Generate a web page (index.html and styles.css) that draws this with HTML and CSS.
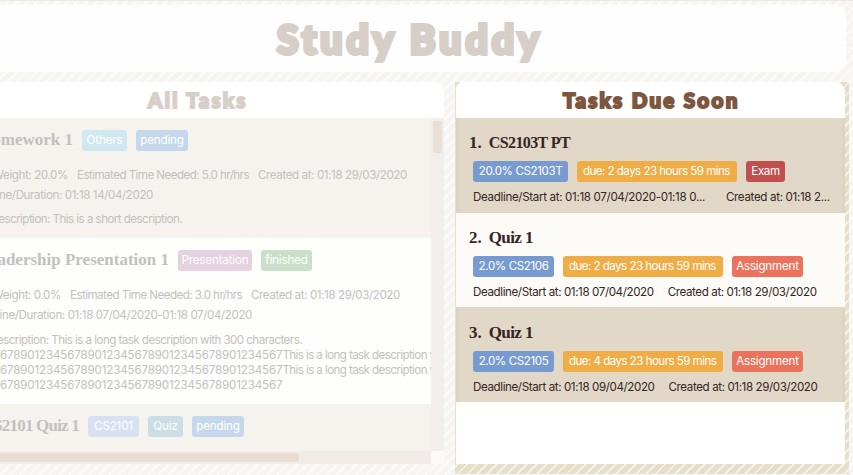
FILE: index.html
```html
<!DOCTYPE html>
<html lang="en">
<head>
<meta charset="utf-8">
<title>Study Buddy</title>
<link rel="stylesheet" href="styles.css">
</head>
<body>
<div class="app">
  <header class="banner"><h1>Study Buddy</h1></header>
  <main class="columns">
    <section class="all">
      <h2>All Tasks</h2>
      <div class="body">
        <div class="list">
          <article class="task t1">
            <div class="head"><h3 class="n1">Homework 1</h3><span class="tag others">Others</span><span class="tag pending">pending</span></div>
            <p class="meta"><span class="w1">Weight: 20.0%</span><span class="est">Estimated Time Needed: 5.0 hr/hrs</span><span>Created at: 01:18 29/03/2020</span></p>
            <p class="date d1">Deadline/Duration: 01:18 14/04/2020</p>
            <p class="desc e1">Description: This is a short description.</p>
          </article>
          <article class="task t2">
            <div class="head"><h3 class="n2">Leadership Presentation 1</h3><span class="tag pres">Presentation</span><span class="tag done">finished</span></div>
            <p class="meta"><span class="w2">Weight: 0.0%</span><span class="est">Estimated Time Needed: 3.0 hr/hrs</span><span>Created at: 01:18 29/03/2020</span></p>
            <p class="date d2">Deadline/Duration: 01:18 07/04/2020-01:18 07/04/2020</p>
            <p class="desc e2">Description: This is a long task description with 300 characters.</p>
            <p class="digits">678901234567890123456789012345678901234567<span>This is a long task description with</span></p>
            <p class="digits">678901234567890123456789012345678901234567<span>This is a long task description with</span></p>
            <p class="digits">678901234567890123456789012345678901234567</p>
          </article>
          <article class="task t3">
            <div class="head"><h3 class="n3">CS2101 Quiz 1</h3><span class="tag module">CS2101</span><span class="tag quiz">Quiz</span><span class="tag pending">pending</span></div>
          </article>
        </div>
        <div class="vbar"><i></i></div>
        <div class="hbar"><i></i></div>
        <div class="corner"></div>
      </div>
    </section>
    <aside class="due">
      <div class="panel">
        <h2>Tasks Due Soon</h2>
        <div class="items">
          <article class="item">
            <h3>1.<b class="tight">CS2103T PT</b></h3>
            <div class="tags"><span class="tag code">20.0% CS2103T</span><span class="tag time">due: 2 days 23 hours 59 mins</span><span class="tag exam">Exam</span></div>
            <p class="foot cut"><span>Deadline/Start at: 01:18 07/04/2020-01:18 0...</span><span>Created at: 01:18 2...</span></p>
          </article>
          <article class="item">
            <h3>2.<b>Quiz 1</b></h3>
            <div class="tags"><span class="tag code">2.0% CS2106</span><span class="tag time">due: 2 days 23 hours 59 mins</span><span class="tag assign">Assignment</span></div>
            <p class="foot"><span>Deadline/Start at: 01:18 07/04/2020</span><span>Created at: 01:18 29/03/2020</span></p>
          </article>
          <article class="item">
            <h3>3.<b>Quiz 1</b></h3>
            <div class="tags"><span class="tag code">2.0% CS2105</span><span class="tag time">due: 4 days 23 hours 59 mins</span><span class="tag assign">Assignment</span></div>
            <p class="foot"><span>Deadline/Start at: 01:18 09/04/2020</span><span>Created at: 01:18 29/03/2020</span></p>
          </article>
        </div>
      </div>
    </aside>
  </main>
</div>
</body>
</html>
```
FILE: styles.css
```css
* { box-sizing: border-box; }
body { margin: 0; }
h1, h2, h3, p { margin: 0; white-space: nowrap; }

.app {
  width: 853px;
  height: 475px;
  padding-top: 5px;
  overflow: hidden;
  border-top: 1px solid #eee8e4;
  background: repeating-linear-gradient(135deg, #f7f5f1 0 5px, #fcfbf9 5px 7px);
  font: 11.6px/15px Inter, "Liberation Sans", sans-serif;
  letter-spacing: -0.4px;
}
.banner {
  width: 846px;
  height: 67px;
  margin-top: -1px;
  border-radius: 0 10px 10px 0;
  background: #fefefe;
}
h1, h2 {
  font-family: Lato, "Open Sans", sans-serif;
  font-weight: 900;
}
h1 {
  padding-left: 277px;
  color: #d8cec8;
  font-size: 39px;
  line-height: 68px;
  letter-spacing: 4px;
  -webkit-text-stroke: 4px #d8cec8;
}
.columns { display: flex; gap: 11px; margin-top: 10px; }

.all { width: 444px; height: 382px; }
h2 {
  height: 36px;
  background: #fff;
  font-size: 20.5px;
  line-height: 36px;
}
.all h2 {
  padding-left: 148px;
  border-radius: 0 10px 0 0;
  color: #d8cec8;
  letter-spacing: 2.3px;
  -webkit-text-stroke: 2px #d8cec8;
}
.body {
  display: grid;
  grid-template: 333px 13px / 431px 13px;
}
.list { overflow: hidden; color: #c4c0be; }
.task { background: #f6f3ef; }
.t1 { height: 120px; padding-top: 12px; }
.t2 { height: 166px; padding-top: 12px; background: #fefefd; }
.t3 { height: 47px; padding-top: 12px; }
.head { display: flex; height: 21px; gap: 9px; }
h3 {
  font: bold 17px/20px "Liberation Serif", serif;
  letter-spacing: 0;
}
.head h3, .w1, .w2, .date, .desc { display: flex; justify-content: flex-end; flex: none; }
.n1 { width: 73px; }
.n2 { width: 169px; }
.n3 { width: 79px; letter-spacing: -0.8px; }
.tag {
  display: block;
  height: 21px;
  border-radius: 3px;
  color: #fff;
  line-height: 21px;
  text-align: center;
  flex: none;
}
.head .tag { letter-spacing: -0.15px; }
.others { width: 45px; background: #d0e9f1; }
.pending { width: 52px; background: #c5d8eb; }
.pres { width: 74px; background: #e4d2e0; }
.done { width: 51px; background: #c9dfca; }
.module { width: 51px; background: #d7e1f2; }
.quiz { width: 35px; background: #cadee5; }
.meta { display: flex; gap: 9px; margin-top: 14px; height: 20px; line-height: 20px; }
.w1 { width: 68px; }
.w2 { width: 61px; }
.est { width: 172px; letter-spacing: -0.55px; }
.date { line-height: 20px; }
.desc { margin-top: 7px; letter-spacing: -0.55px; }
.d1 { width: 153px; }
.d2 { width: 252px; }
.e1 { width: 182px; }
.e2 { width: 302px; line-height: 16px; }
.digits { height: 15px; letter-spacing: -0.15px; }
.digits span { letter-spacing: -0.6px; }
.vbar { padding: 3px 2px; background: #f2eeea; }
.vbar i { display: block; width: 9px; height: 32px; border-radius: 2px; background: #e9dfd6; }
.hbar { padding: 2px 0; background: #f1ece7; }
.hbar i { display: block; width: 299px; height: 9px; border-radius: 0 3px 3px 0; background: #e9ddd3; }
.corner { background: #fafafa; }

.due {
  width: 394px;
  height: 392px;
  background: repeating-linear-gradient(135deg, #e5dec9 0 5px, #f4f0e4 5px 7px);
}
.panel {
  width: 390px;
  height: 382px;
  border-left: 1px solid #e8dfcf;
  border-radius: 8px 10px 0 0;
  overflow: hidden;
  background: #fff;
}
.due h2 {
  padding-left: 107px;
  color: #7d563f;
  letter-spacing: 2.3px;
  -webkit-text-stroke: 2px #7d563f;
}
.item {
  height: 94.6px;
  padding: 14px 0 0 13px;
  color: #332624;
  background: #e2d8c8;
  box-shadow: inset 5px 0 5px -5px #d3c8b6, inset -5px 0 5px -5px #d3c8b6;
}
.item:nth-child(2) { background: #fcfbf7; box-shadow: none; }
.item:nth-child(3) { padding-top: 15px; }
.item h3 { height: 29px; line-height: 22px; }
.item h3 b { margin-left: 7px; letter-spacing: -0.6px; }
.item h3 .tight { font-size: 16px; letter-spacing: -0.6px; }
.tags { display: flex; gap: 9px; padding-left: 4px; }
.code { width: 81px; background: #779bd0; }
.item:first-child .code { width: 95px; }
.time {
  width: 160px;
  padding-left: 6px;
  background: #f0ad46;
  letter-spacing: -0.55px;
  text-align: left;
}
.exam { width: 39px; background: #c0504f; }
.assign { width: 71px; background: #eb735e; letter-spacing: -0.2px; }
.foot { display: flex; gap: 14px; padding: 8px 0 0 4px; }
.cut { gap: 21px; letter-spacing: -0.34px; }
```
